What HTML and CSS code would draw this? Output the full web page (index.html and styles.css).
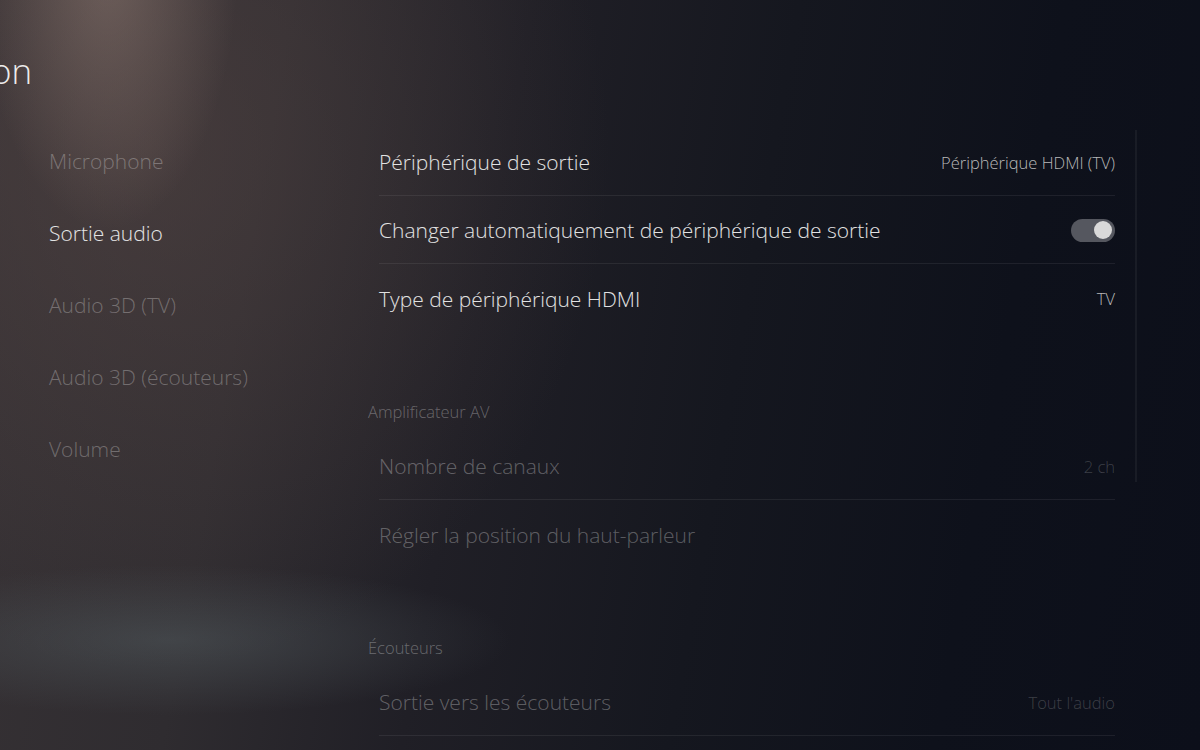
FILE: index.html
```html
<!DOCTYPE html>
<html>
  <head>
    <title>Son</title>
    <link rel="stylesheet" href="styles.css">
  </head>
  <body>
    <div class="screen">
      <h1 class="title">Son</h1>
      <div class="layout">
        <ul class="menu">
          <li class="menu-item">Microphone</li>
          <li class="menu-item active">Sortie audio</li>
          <li class="menu-item">Audio 3D (TV)</li>
          <li class="menu-item">Audio 3D (écouteurs)</li>
          <li class="menu-item">Volume</li>
        </ul>

        <div class="settings">
          <div class="group">
            <div class="row">
              <span class="label">Périphérique de sortie</span>
              <span class="value">Périphérique HDMI (TV)</span>
            </div>
            <div class="row">
              <span class="label">Changer automatiquement de périphérique de sortie</span>
              <span class="toggle on"><span class="knob"></span></span>
            </div>
            <div class="row">
              <span class="label">Type de périphérique HDMI</span>
              <span class="value">TV</span>
            </div>
          </div>

          <div class="group disabled">
            <h2 class="group-title">Amplificateur AV</h2>
            <div class="row">
              <span class="label">Nombre de canaux</span>
              <span class="value">2 ch</span>
            </div>
            <div class="row">
              <span class="label">Régler la position du haut-parleur</span>
            </div>
          </div>

          <!-- list keeps going below the fold, so its last row keeps a divider -->
          <div class="group disabled continues">
            <h2 class="group-title">Écouteurs</h2>
            <div class="row">
              <span class="label">Sortie vers les écouteurs</span>
              <span class="value">Tout l'audio</span>
            </div>
          </div>
        </div>
      </div>
      <div class="scrollbar"></div>
    </div>
  </body>
</html>
```

FILE: styles.css
```css
html, body {
  margin: 0;
  padding: 0;
}

body {
  font-family: "Open Sans", "Noto Sans", sans-serif;
  font-weight: 300;
  color: #e2e2e2;
  overflow: hidden;
}

.screen {
  position: relative;
  width: 1200px;
  height: 750px;
  overflow: hidden;
  background:
    radial-gradient(ellipse 130px 270px at 108px -40px, rgba(178, 152, 140, 0.4), rgba(178, 152, 140, 0) 100%),
    radial-gradient(ellipse 340px 75px at 170px 640px, rgba(80, 88, 92, 0.55), rgba(80, 88, 92, 0) 100%),
    radial-gradient(ellipse 460px 520px at 150px 150px, rgba(88, 72, 70, 0.5), rgba(88, 72, 70, 0) 100%),
    linear-gradient(100deg, #373235 0%, #2f2c30 22%, #201f26 40%, #15171f 60%, #0e111b 80%, #0c0f1a 100%);
}

.title {
  margin: 0 0 0 -28px;
  padding-top: 53px;
  height: 73px;
  box-sizing: border-box;
  font-size: 35px;
  font-weight: 300;
  line-height: 35px;
  color: #ececec;
}

.layout {
  display: flex;
}

.menu {
  list-style: none;
  margin: 0;
  padding: 52px 0 0 49px;
  width: 330px;
}

.menu-item {
  height: 72px;
  line-height: 72px;
  font-size: 21px;
  color: rgba(255, 255, 255, 0.28);
}

.menu-item.active {
  color: #e4e4e4;
}

.settings {
  width: 736px;
  padding-top: 55px;
}

.group + .group {
  margin-top: 70px;
}

.group-title {
  margin: 0 0 10px -11px;
  height: 20px;
  line-height: 20px;
  font-size: 16.5px;
  font-weight: 300;
  color: rgba(255, 255, 255, 0.3);
}

.row {
  display: flex;
  align-items: center;
  justify-content: space-between;
  height: 68px;
  box-sizing: border-box;
  border-bottom: 1px solid rgba(255, 255, 255, 0.07);
  padding-top: 1px;
}

.row:last-child {
  border-bottom: none;
}

.continues .row:last-child {
  border-bottom: 1px solid rgba(255, 255, 255, 0.07);
}

.label {
  font-size: 21px;
}

.value {
  font-size: 16.5px;
  color: #b8b8b8;
}

.disabled .label {
  color: rgba(255, 255, 255, 0.3);
}

.disabled .value {
  color: rgba(255, 255, 255, 0.2);
}

.toggle {
  display: flex;
  align-items: center;
  justify-content: flex-end;
  width: 44px;
  height: 23px;
  padding: 0 3px;
  box-sizing: border-box;
  border-radius: 12px;
  background-color: #55575f;
}

.knob {
  width: 18px;
  height: 18px;
  border-radius: 50%;
  background-color: #d9d9d9;
}

.scrollbar {
  position: absolute;
  left: 1135px;
  top: 130px;
  width: 2px;
  height: 352px;
  background-color: rgba(255, 255, 255, 0.05);
}
```
